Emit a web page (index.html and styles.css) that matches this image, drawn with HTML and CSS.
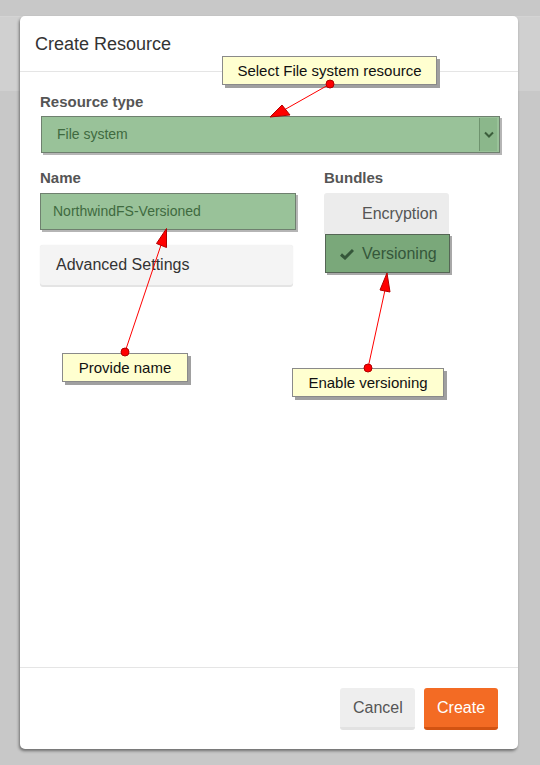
FILE: index.html
```html
<!DOCTYPE html>
<html>
<head>
<meta charset="utf-8">
<link rel="stylesheet" href="styles.css">
</head>
<body>
<div class="backdrop">
  <div class="band"></div>
  <div class="modal">
    <div class="modal-header">Create Resource</div>
    <div class="modal-body">
      <div class="label">Resource type</div>
      <div class="select">
        <span class="select-text">File system</span>
        <span class="select-arrow">
          <svg width="10" height="7" viewBox="0 0 10 7"><path d="M1 1.5 L5 5.5 L9 1.5" fill="none" stroke="#3b5e3b" stroke-width="2"/></svg>
        </span>
      </div>
      <div class="row">
        <div class="col-left">
          <div class="label">Name</div>
          <div class="input">NorthwindFS-Versioned</div>
          <div class="panel">Advanced Settings</div>
        </div>
        <div class="col-right">
          <div class="label">Bundles</div>
          <div class="bundle">
            <span class="check hidden"></span><span>Encryption</span>
          </div>
          <div class="bundle active">
            <svg class="check" width="14" height="12" viewBox="0 0 14 12"><path d="M1 6.5 L5 10 L13 2" fill="none" stroke="#35573a" stroke-width="3"/></svg><span>Versioning</span>
          </div>
        </div>
      </div>
    </div>
    <div class="modal-footer">
      <button class="btn btn-cancel">Cancel</button>
      <button class="btn btn-create">Create</button>
    </div>
  </div>

  <div class="callout callout-select">Select File system resource</div>
  <div class="callout callout-name">Provide name</div>
  <div class="callout callout-version">Enable versioning</div>

  <svg class="arrows" width="540" height="765" viewBox="0 0 540 765">
    <g stroke="#ff0000" stroke-width="1">
      <line x1="330" y1="84" x2="284" y2="110"/>
      <line x1="125" y1="352" x2="161" y2="245"/>
      <line x1="368" y1="368" x2="385" y2="290"/>
    </g>
    <g fill="#ff0000" stroke="#b00000" stroke-width="1" stroke-linejoin="round">
      <polygon points="270,117 282,105 290,115"/>
      <polygon points="166.5,228.5 156.5,243.5 166.5,247.5"/>
      <polygon points="387,273 380,290 390,292"/>
      <circle cx="330" cy="84" r="4"/>
      <circle cx="125" cy="352" r="4"/>
      <circle cx="368" cy="368" r="4"/>
    </g>
  </svg>
</div>
</body>
</html>
```
FILE: styles.css
```css
html, body {
  margin: 0;
  padding: 0;
}
body {
  background: #c8c8c8;
  font-family: "Liberation Sans", Arial, sans-serif;
  width: 540px;
  height: 765px;
  overflow: hidden;
}
.backdrop {
  position: relative;
  width: 540px;
  height: 765px;
  padding-top: 16px;
  box-sizing: border-box;
}
.band {
  position: absolute;
  left: 0;
  top: 16px;
  width: 540px;
  height: 74px;
  background: #d0d0d0;
  border-top: 1px solid #d4d4d4;
}
.modal {
  position: relative;
  margin-left: 20px;
  width: 498px;
  height: 733px;
  background: #fff;
  border-radius: 5px;
  box-shadow: -1px 2px 3px rgba(0,0,0,0.45);
  display: flex;
  flex-direction: column;
}
.modal-header {
  height: 56px;
  box-sizing: border-box;
  padding: 18px 15px 0 15px;
  font-size: 18px;
  color: #333;
  border-bottom: 1px solid #e5e5e5;
}
.modal-body {
  flex: 1;
  padding: 21px 18px 0 20px;
}
.label {
  font-size: 15px;
  font-weight: bold;
  color: #555;
  line-height: 18px;
  margin-bottom: 5px;
}
.select {
  margin-left: 1px;
  height: 37px;
  box-sizing: border-box;
  background: #99c299;
  border: 1px solid #6f806f;
  box-shadow: 2px 2px 0 #b5b5b5;
  display: flex;
  align-items: stretch;
}
.select-text {
  flex: 1;
  padding-left: 15px;
  font-size: 14px;
  color: #3f6a3f;
  line-height: 35px;
}
.select-arrow {
  width: 17px;
  margin: 1px 2px 1px 0;
  background: #8bb78b;
  border-left: 1px solid #6e936e;
  display: flex;
  align-items: center;
  justify-content: center;
}
.row {
  display: flex;
  gap: 28px;
  margin-top: 16px;
}
.col-left {
  width: 256px;
}
.col-right {
  width: 140px;
}
.input {
  height: 37px;
  box-sizing: border-box;
  background: #99c299;
  border: 1px solid #6f806f;
  box-shadow: 2px 2px 0 #b5b5b5;
  padding-left: 12px;
  font-size: 14px;
  color: #3f6a3f;
  line-height: 35px;
  margin-top: 6px;
}
.panel {
  margin-top: 15px;
  width: 253px;
  height: 40px;
  box-sizing: border-box;
  background: #f4f4f4;
  border-radius: 3px;
  box-shadow: 0 2px 0 #e4e4e4, 0 0 1px #e0e0e0;
  padding-left: 16px;
  font-size: 16px;
  color: #333;
  line-height: 40px;
}
.bundle {
  width: 125px;
  height: 41px;
  box-sizing: border-box;
  background: #ececec;
  border-radius: 3px 3px 0 0;
  display: flex;
  align-items: center;
  padding-left: 16px;
  font-size: 16px;
  color: #555;
}
.col-right .label {
  margin-bottom: 6px;
}
.check {
  width: 14px;
  margin-right: 8px;
}
.check.hidden {
  display: inline-block;
  height: 12px;
}
.bundle.active {
  margin-left: 1px;
  height: 39px;
  background: #7aa87a;
  border: 1px solid #556655;
  border-radius: 0;
  box-shadow: 2px 2px 0 #a8a8a8;
  color: #35573a;
  padding-left: 14px;
}
.modal-footer {
  height: 82px;
  box-sizing: border-box;
  border-top: 1px solid #e5e5e5;
  display: flex;
  justify-content: flex-end;
  align-items: flex-start;
  gap: 9px;
  padding: 20px 20px 0 0;
}
.btn {
  font-family: "Liberation Sans", Arial, sans-serif;
  font-size: 16px;
  height: 42px;
  border: none;
  border-radius: 3px;
  padding: 0 13px;
}
.btn-cancel {
  width: 75px;
  background: #eeeeee;
  color: #555;
  border-bottom: 3px solid #e2e2e2;
}
.btn-create {
  width: 74px;
  background: #f36b24;
  color: #fff;
  border-bottom: 3px solid #d25312;
}
.arrows {
  position: absolute;
  left: 0;
  top: 0;
  pointer-events: none;
}
.callout {
  position: absolute;
  background: #ffffd0;
  border: 1px solid #8a8a8a;
  box-shadow: 3px 3px 0 #a0a0a0;
  font-size: 15px;
  color: #111;
  box-sizing: border-box;
  text-align: center;
  line-height: 27px;
}
.callout-select {
  left: 222px;
  top: 56px;
  width: 215px;
  height: 29px;
}
.callout-name {
  left: 62px;
  top: 353px;
  width: 126px;
  height: 29px;
}
.callout-version {
  left: 292px;
  top: 368px;
  width: 152px;
  height: 29px;
}
```
